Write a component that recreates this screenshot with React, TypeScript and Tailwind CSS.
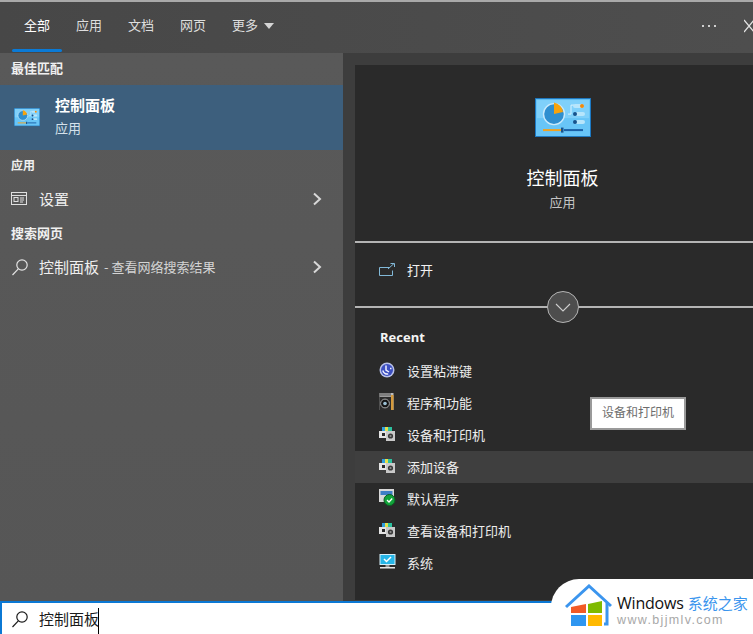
const Chevron = () => (
  <svg width="12" height="16" viewBox="0 0 12 16" fill="none" stroke="#d8d8d8" strokeWidth="2"><path d="M3 2.5 9 8l-6 5.5" /></svg>
);

const Search = ({ color }: { color: string }) => (
  <svg width="18" height="18" viewBox="0 0 18 18" fill="none" stroke={color} strokeWidth="1.2"><circle cx="11" cy="7" r="5.2" /><path d="M7.3 10.8 1.5 17" /></svg>
);

const PanelIcon = ({ size }: { size: number }) => (
  <svg width={size} height={size * 0.7} viewBox="0 0 56 39">
    <rect x="0.5" y="0.5" width="55" height="38" fill="#68c5f7" stroke="#1c79c4" />
    <rect x="2" y="2" width="52" height="18" fill="#7fd0fa" />
    <circle cx="19" cy="16" r="10.5" fill="#2f8fd0" stroke="#c9eafc" strokeWidth="1.4" />
    <path d="M19 16V4.5A11 11 0 0 1 28 14Z" fill="#f7a30c" />
    <path d="M33 16h3V7h3" stroke="#d8f1fd" fill="none" />
    <rect x="38" y="6" width="11" height="4" rx="2" fill="#b7e5fb" />
    <circle cx="47" cy="8" r="2" fill="#f28a0a" />
    <rect x="40" y="14" width="10" height="4" rx="2" fill="#b7e5fb" />
    <circle cx="40" cy="16" r="2" fill="#17528c" />
    <rect x="40" y="22" width="10" height="4" rx="2" fill="#b7e5fb" />
    <circle cx="40" cy="24" r="2" fill="#17528c" />
    <rect x="8" y="31" width="19" height="2" fill="#f2a21e" />
    <rect x="29" y="31" width="19" height="2" fill="#1a5fa5" />
    <rect x="26" y="29.5" width="2.5" height="5" fill="#17528c" />
  </svg>
);

const Device = () => (
  <svg width="16" height="14" viewBox="0 0 16 14">
    <rect x="3" y="0" width="3" height="4" fill="#2f9fe0" />
    <rect x="6" y="0" width="3" height="4" fill="#e4e04a" />
    <rect x="9" y="0" width="4" height="4" fill="#2cc1a0" />
    <rect x="0" y="4" width="7" height="7" fill="#e4e4e4" />
    <rect x="3" y="6" width="3" height="3" fill="#2a2a2a" />
    <rect x="7" y="4" width="9" height="10" fill="#c9c9c9" />
    <circle cx="11.5" cy="9" r="2.6" fill="#3a3a3a" />
    <circle cx="11.5" cy="9" r="1.1" fill="#8f8f8f" />
  </svg>
);

const Sticky = () => (
  <svg width="16" height="16" viewBox="0 0 16 16">
    <circle cx="8" cy="8" r="7.5" fill="#b9c2ea" />
    <circle cx="8" cy="8" r="6" fill="#3c4fc0" />
    <path d="M7 3.5v4.5l3 2M3.8 8.5c.6 2.4 3 3.8 5.4 3.4M11 6.5h1.5" stroke="#eef0ff" strokeWidth="1.5" fill="none" />
  </svg>
);

const Programs = () => (
  <svg width="15" height="17" viewBox="0 0 15 17">
    <rect x="0.5" y="0" width="14" height="17" fill="#bdbdbd" />
    <rect x="12" y="2" width="2.5" height="15" fill="#d49a3c" />
    <rect x="1" y="0" width="11" height="3.5" fill="#7f7f7f" />
    <rect x="0.5" y="4" width="11.5" height="13" fill="#2c2c2c" />
    <circle cx="6" cy="10.5" r="4.4" fill="#141414" stroke="#a9a9a9" />
    <circle cx="6" cy="10.5" r="1.8" fill="#9cc1d4" />
  </svg>
);

const Defaults = () => (
  <svg width="17" height="17" viewBox="0 0 17 17">
    <rect x="0" y="0" width="15" height="13" fill="#d9d9d9" />
    <rect x="1.5" y="2" width="12" height="4" fill="#3f7fc5" />
    <circle cx="10.5" cy="11" r="5.5" fill="#12a33a" stroke="#0b5e22" />
    <path d="m8 11 2 2 3.2-3.5" stroke="#fff" strokeWidth="1.3" fill="none" />
  </svg>
);

const Monitor = () => (
  <svg width="17" height="15" viewBox="0 0 17 15">
    <rect x="0.5" y="0" width="16" height="11" fill="#d5effa" />
    <rect x="1.5" y="1" width="14" height="9" fill="#27b6e8" />
    <path d="m5 5 2.5 2.5L12 3" stroke="#fff" strokeWidth="1.5" fill="none" />
    <rect x="6.5" y="11" width="4" height="2" fill="#9a9a9a" />
    <rect x="1" y="13" width="15" height="1.5" fill="#e5e5e5" />
  </svg>
);

const House = () => (
  <svg width="50" height="44" viewBox="0 0 50 44">
    <path d="M2 23 25 2l22 20" fill="none" stroke="#3b95ee" strokeWidth="3" />
    <path d="M43 19v21h-3" fill="none" stroke="#3b95ee" strokeWidth="3" />
    <path d="M7 23 22 20v9H7Z" fill="#f25a26" />
    <path d="M24 20 38 17v12H24Z" fill="#7fba00" />
    <path d="M7 31h15v11H7Z" fill="#2f96f0" />
    <path d="M24 31h14v11H24Z" fill="#ffb900" />
  </svg>
);

const recent: [string, React.ReactNode, boolean?][] = [
  ["设置粘滞键", <Sticky />],
  ["程序和功能", <Programs />],
  ["设备和打印机", <Device />],
  ["添加设备", <Device />, true],
  ["默认程序", <Defaults />],
  ["查看设备和打印机", <Device />],
  ["系统", <Monitor />],
];

export default function App() {
  return (
    <div
      className="relative flex h-[634px] w-[753px] flex-col overflow-hidden bg-[#3d3d3d] text-white"
      style={{ fontFamily: '"Noto Sans CJK SC", sans-serif' }}
    >
      {/* top tabs */}
      <div className="flex h-[53px] shrink-0 items-start border-t-2 border-[#a9a9a9] bg-gradient-to-r from-[#474747] to-[#4e4e4e]">
        <div className="flex items-start pl-[11px] pt-[14px] text-[13px] leading-[18px] text-[#dedede]">
          <div className="w-[52px] text-center text-white">
            全部
            <div className="ml-[1px] mt-[15px] h-[3px] w-[50px] rounded-sm bg-[#0a7ad6]" />
          </div>
          <div className="w-[52px] text-center">应用</div>
          <div className="w-[52px] text-center">文档</div>
          <div className="w-[52px] text-center">网页</div>
          <div className="flex items-center gap-[6px] pl-[13px]">
            <span className="shrink-0">更多</span>
            <span className="mt-[2px] h-0 w-0 border-x-[5px] border-t-[6px] border-x-transparent border-t-[#d5d5d5]" />
          </div>
        </div>
        <div className="ml-auto flex items-center gap-[28px] pt-[16px]">
          <span className="flex gap-[4px]">
            <i className="h-[2px] w-[2px] bg-[#d0d0d0]" />
            <i className="h-[2px] w-[2px] bg-[#d0d0d0]" />
            <i className="h-[2px] w-[2px] bg-[#d0d0d0]" />
          </span>
          <svg width="9" height="16" viewBox="0 0 9 16" fill="none" stroke="#e2e2e2" strokeWidth="1.3"><path d="M0 2 10 14M0 14 10 2" /></svg>
        </div>
      </div>

      <div className="flex min-h-0 flex-1">
        {/* left column */}
        <div className="flex w-[343px] shrink-0 flex-col bg-gradient-to-b from-[#595959] to-[#565656]">
          <div className="h-[32px] pl-[11px] pt-[6px] text-[13px] font-bold leading-[18px] text-[#f0f0f0]">最佳匹配</div>
          <div className="flex h-[65px] items-center bg-[#3d5f7d] pl-[14px]">
            <PanelIcon size={26} />
            <div className="ml-[15px] -mt-[3px]">
              <div className="text-[15px] font-bold leading-[22px]">控制面板</div>
              <div className="mt-[2px] text-[13px] leading-[20px] text-[#d5e1eb]">应用</div>
            </div>
          </div>
          <div className="h-[30px] pl-[11px] pt-[6px] text-[12px] font-bold leading-[18px] text-[#f0f0f0]">应用</div>
          <div className="flex h-[38px] items-center pl-[11px] pr-[20px]">
            <svg width="16" height="14" viewBox="0 0 16 14" fill="none" stroke="#e0e0e0"><rect x="0.5" y="0.5" width="15" height="12" /><path d="M0.5 3.5h15" /><rect x="3" y="5.5" width="4" height="4" /><path d="M9 6h4M9 8h4M9 10h3" /></svg>
            <span className="ml-[12px] text-[15px] text-[#efefef]">设置</span>
            <span className="ml-auto"><Chevron /></span>
          </div>
          <div className="h-[30px] pl-[11px] pt-[6px] text-[13px] font-bold leading-[18px] text-[#f0f0f0]">搜索网页</div>
          <div className="flex h-[38px] items-center pl-[11px] pr-[20px]">
            <Search color="#e4e4e4" />
            <span className="ml-[10px] text-[15px] text-[#efefef]">控制面板</span>
            <span className="ml-[5px] text-[13px] text-[#d4d4d4]">- 查看网络搜索结果</span>
            <span className="ml-auto"><Chevron /></span>
          </div>
        </div>

        {/* right preview panel */}
        <div className="mt-[12px] mb-[1px] ml-[12px] flex flex-1 flex-col bg-[#2a2a2a]">
          <div className="flex h-[178px] shrink-0 flex-col items-center border-b-2 border-[#b4b4b4] pl-[17px]">
            <div className="mt-[33px]"><PanelIcon size={56} /></div>
            <div className="mt-[27px] text-[18px] leading-[27px]">控制面板</div>
            <div className="mt-[1px] text-[13px] leading-[20px] text-[#c4c4c4]">应用</div>
          </div>
          <div className="relative flex h-[65px] shrink-0 items-center border-b-2 border-[#b4b4b4] pl-[24px] pb-[10px]">
            <svg width="16" height="14" viewBox="0 0 16 14" fill="none" stroke="#82b9d8"><path d="M10.5 4.5h-10v8h13v-5" /><path d="M9 6l6-5.5M11.5.5H15.5V4" /></svg>
            <span className="ml-[12px] text-[13px] text-[#f2f2f2]">打开</span>
            <div className="absolute bottom-[-17px] left-[192px] flex h-[32px] w-[32px] items-center justify-center rounded-full border border-[#b4b4b4] bg-[#4d4d4d]">
              <svg width="16" height="9" viewBox="0 0 16 9" fill="none" stroke="#cfcfcf" strokeWidth="1.1"><path d="m1 1 7 7 7-7" /></svg>
            </div>
          </div>
          <div className="pl-[25px] pt-[20px] font-['Open_Sans'] text-[13px] font-bold leading-[18px] text-[#f4f4f4]">Recent</div>
          <div className="mt-[9px] flex flex-col">
            {recent.map(([label, icon, hover]) => (
              <div key={label} className={`flex h-[32px] items-center pl-[24px] ${hover ? "bg-[#3f3f3f]" : ""}`}>
                <span className="-mt-[3px] flex w-[28px] shrink-0">{icon}</span>
                <span className="text-[13px] text-[#ededed]">{label}</span>
              </div>
            ))}
          </div>
        </div>
      </div>

      {/* search box */}
      <div className="flex h-[33px] shrink-0 items-center border-t-2 border-l-2 border-[#0b78d4] bg-white pl-[9px]">
        <Search color="#1a1a1a" />
        <span className="ml-[10px] pt-[1px] text-[15px] leading-[22px] text-[#1a1a1a]">控制面板</span>
        <span className="-ml-[1px] h-[26px] w-px self-end bg-black" />
      </div>

      {/* tooltip */}
      <div className="absolute left-[590px] top-[397px] flex h-[33px] w-[96px] items-center justify-center border-2 border-[#9a9a9a] bg-white pb-[3px] text-[12px] text-[#6d6d6d]">
        设备和打印机
      </div>

      {/* watermark */}
      <div className="absolute right-0 bottom-0 flex h-[55px] w-[202px] rounded-tl-[28px] bg-white pl-[13px] pt-[5px]">
        <House />
        <div className="ml-[3px] flex flex-col pt-[10px]">
          <div className="flex items-center whitespace-nowrap leading-[18px]">
            <span className="font-['Open_Sans'] text-[16px] font-medium tracking-[-0.2px] text-[#111]">Windows</span>
            <span className="ml-[4px] text-[15px] text-[#3b95ee]">系统之家</span>
          </div>
          <div className="font-['Liberation_Sans'] text-[12.5px] leading-[16px] tracking-[1.35px] text-[#a8a8a8]">www.bjjmlv.com</div>
        </div>
      </div>
    </div>
  );
}
